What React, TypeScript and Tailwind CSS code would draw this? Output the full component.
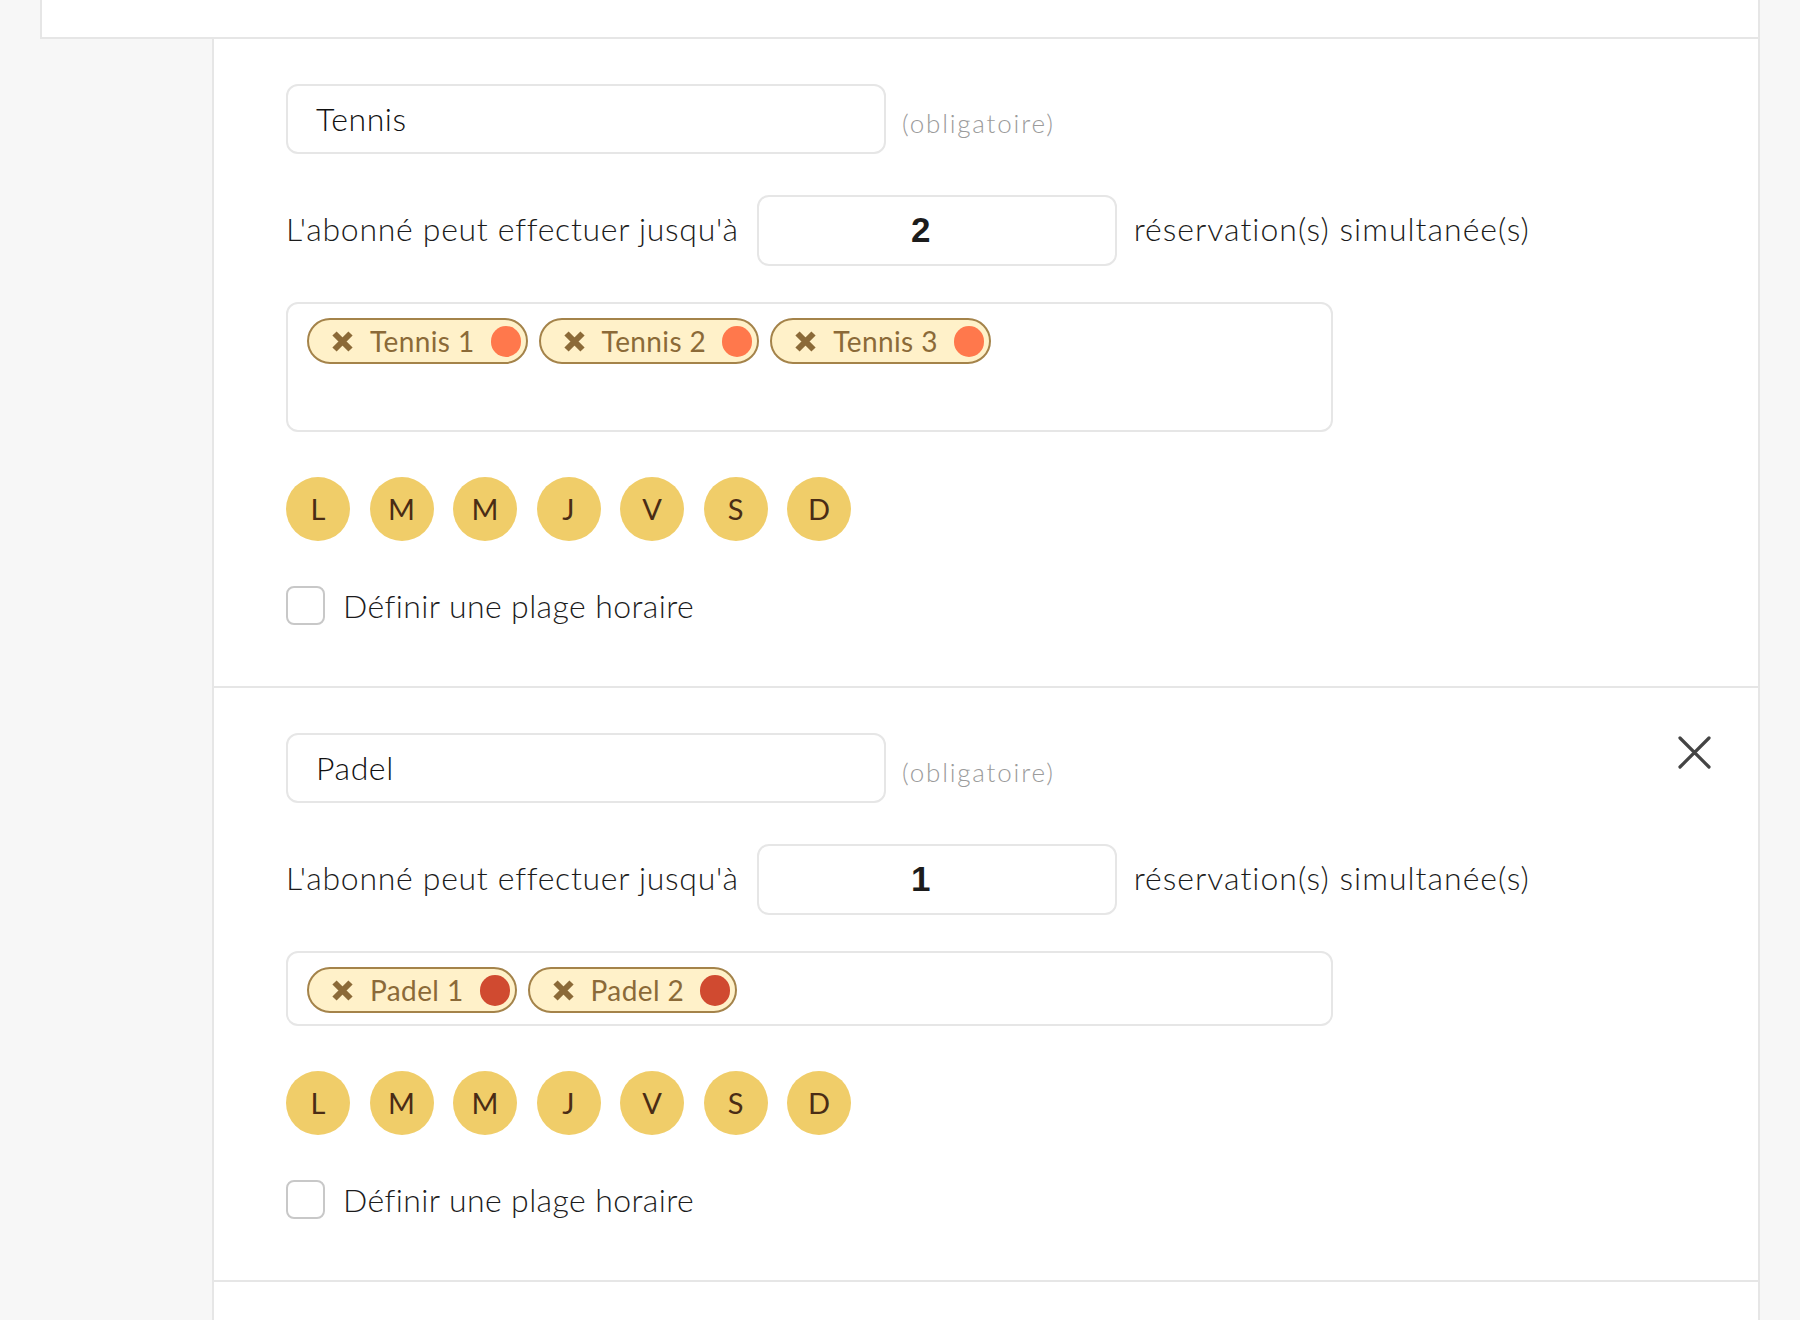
import React from "react";

type SectionProps = {
  name: string;
  count: string;
  tags: string[];
  dot: string;
  boxHeight: string;
  closable?: boolean;
};

const days = ["L", "M", "M", "J", "V", "S", "D"];

function TagX() {
  return (
    <svg width="23" height="23" viewBox="0 0 23 23" className="shrink-0">
      <path d="M3.5 3.5 L19.5 19.5 M19.5 3.5 L3.5 19.5" stroke="#8b6a38" strokeWidth="6" strokeLinecap="butt" />
    </svg>
  );
}

function Section({ name, count, tags, dot, boxHeight, closable }: SectionProps) {
  return (
    <div className="flex flex-col border-b-2 border-[#e6e6e6] pl-[72px] pr-[47px] pt-[45px] pb-[61px]">
      <div className="flex items-start">
        <div className="flex h-[70px] w-[600px] items-center rounded-[12px] border-2 border-[#e6e6e6] pl-[28px] text-[32px] font-light tracking-[0.6px] text-[#111111]">
          {name}
        </div>
        <div className="ml-[16px] mt-[20px] text-[26px] font-light tracking-[1.8px] text-[#9b9b9b]">(obligatoire)</div>
        {closable && (
          <div className="ml-auto mt-[3px]">
            <svg width="33" height="33" viewBox="0 0 33 33">
              <path d="M2 2 L31 31 M31 2 L2 31" stroke="#444444" strokeWidth="3.2" strokeLinecap="round" />
            </svg>
          </div>
        )}
      </div>
      <div className="mt-[41px] flex items-center">
        <div className="mt-[-3px] text-[32px] font-light tracking-[0.7px] text-[#1c1c1c]">L'abonné peut effectuer jusqu'à</div>
        <div className="ml-[18px] flex h-[71px] w-[360px] items-center justify-center rounded-[12px] border-2 border-[#e6e6e6] pr-[32px] font-['Liberation_Sans',sans-serif] text-[35px] font-bold text-[#1c1c1c]">
          {count}
        </div>
        <div className="ml-[17px] mt-[-3px] text-[32px] font-light tracking-[1px] text-[#1c1c1c]">réservation(s) simultanée(s)</div>
      </div>
      <div
        className={`mt-[36px] flex w-[1047px] flex-wrap content-start items-start gap-[11px] rounded-[12px] border-2 border-[#e6e6e6] pl-[19px] pt-[14px] ${boxHeight}`}
      >
        {tags.map((t) => (
          <div
            key={t}
            className="flex h-[46px] items-center rounded-full border-2 border-[#a4834a] bg-[#fff1c9] pl-[22px] pr-[5px]"
          >
            <TagX />
            <span className="ml-[16px] text-[28px] leading-none tracking-[0.4px] text-[#8b6a38]">{t}</span>
            <span className="ml-[16px] h-[31px] w-[30px] rounded-full" style={{ backgroundColor: dot }} />
          </div>
        ))}
      </div>
      <div className="mt-[45px] flex gap-[19.5px]">
        {days.map((d, i) => (
          <div
            key={i}
            className="flex h-[64px] w-[64px] items-center justify-center rounded-full bg-[#f0cd69] text-[29px] text-[#4a2c15]"
          >
            {d}
          </div>
        ))}
      </div>
      <div className="mt-[45px] flex h-[39px] items-center">
        <div className="h-[39px] w-[39px] rounded-[8px] border-2 border-[#c8c8c8] bg-white" />
        <div className="ml-[18px] text-[32px] font-light leading-none tracking-[0.4px] text-[#1c1c1c]">Définir une plage horaire</div>
      </div>
    </div>
  );
}

export default function App() {
  return (
    <div className="min-h-[1320px] w-full bg-[#f7f7f7] font-['Lato',sans-serif]">
      <div className="ml-[40px] h-[39px] w-[1720px] border-x-2 border-b-2 border-[#e6e6e6] bg-white" />
      <div className="ml-[212px] w-[1548px] border-x-2 border-[#e6e6e6] bg-white">
        <Section
          name="Tennis"
          count="2"
          tags={["Tennis 1", "Tennis 2", "Tennis 3"]}
          dot="#ff784c"
          boxHeight="h-[130px]"
        />
        <Section
          name="Padel"
          count="1"
          tags={["Padel 1", "Padel 2"]}
          dot="#d04a30"
          boxHeight="h-[75px]"
          closable
        />
        <div className="h-[45px]" />
      </div>
    </div>
  );
}
